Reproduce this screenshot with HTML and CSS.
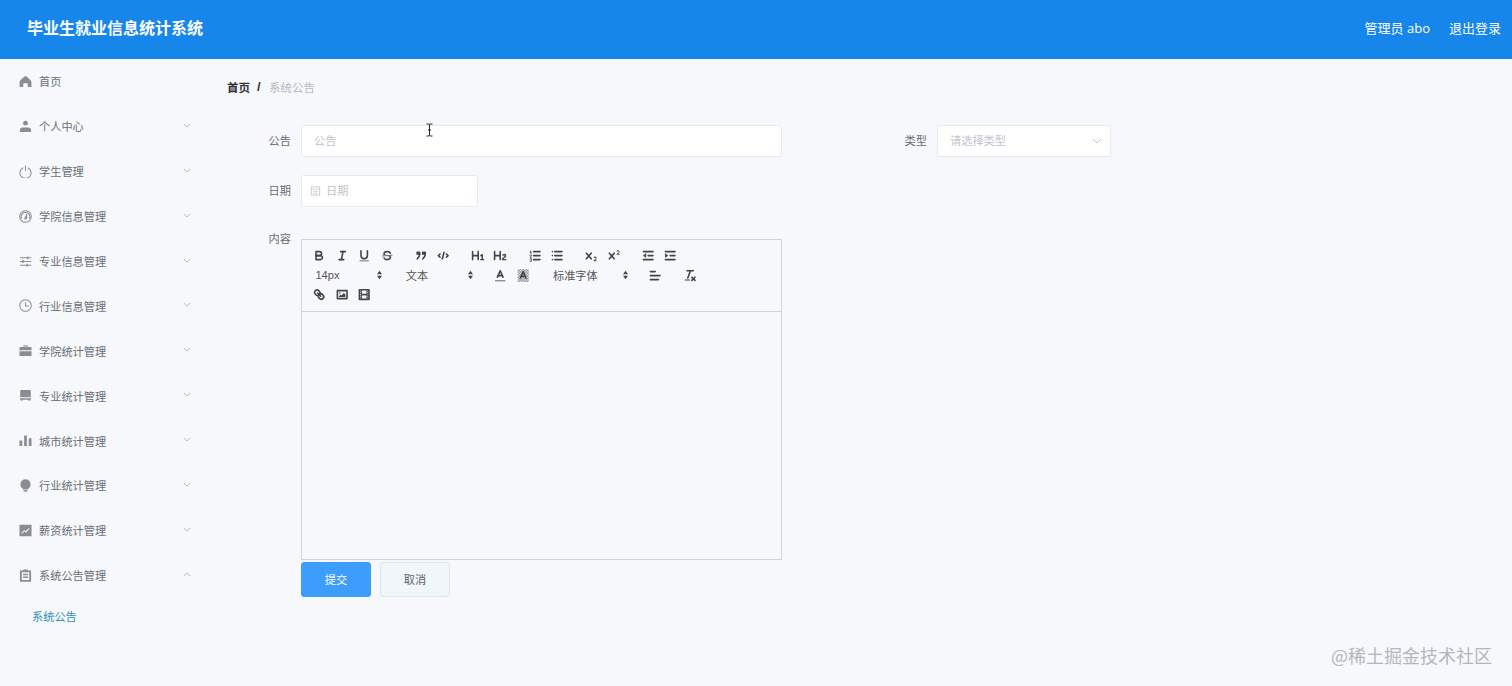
FILE: index.html
```html
<!DOCTYPE html>
<html lang="zh">
<head>
<meta charset="utf-8">
<title>毕业生就业信息统计系统</title>
<link rel="stylesheet" href="styles.css">
</head>
<body>
<svg class="sprite" aria-hidden="true">
  <defs>
    <symbol id="chev" viewBox="0 0 10 6"><polyline points="1 1 5 5 9 1"/></symbol>
    <symbol id="arrows" viewBox="0 0 8 12"><path d="M4 1 7 5H1zM4 11 1 7H7z"/></symbol>
    <pattern id="dots" width="2" height="2" patternUnits="userSpaceOnUse"><rect width="1" height="1" fill="#444"/><rect x="1" y="1" width="1" height="1" fill="#444"/></pattern>
  </defs>
</svg>
<header class="topbar">
  <div class="brand">毕业生就业信息统计系统</div>
  <div class="top-actions"><span>管理员 abo</span><span>退出登录</span></div>
</header>
<div class="layout">
  <nav class="sidebar">
    <div class="menu-item">
      <svg class="mi" viewBox="0 0 14 14"><path d="M7 1C5 2.200 1.600 4.600.6 7.200V13h4V9h4.800v4h4V7.200C12.400 4.600 9 2.200 7 1z"/></svg>
      <span>首页</span>
    </div>
    <div class="menu-item">
      <svg class="mi" viewBox="0 0 14 14"><circle cx="7" cy="3.400" r="2.600"/><path d="M1 13v-2c0-1.800 1.200-2.800 2.800-2.800h6.400c1.600 0 2.800 1 2.800 2.800v2z"/></svg>
      <span>个人中心</span><svg class="chev"><use href="#chev"/></svg>
    </div>
    <div class="menu-item">
      <svg class="mi line" viewBox="0 0 14 14"><path d="M4.400 3A6 6 0 1 0 9.600 3M7 .5V6.500"/></svg>
      <span>学生管理</span><svg class="chev"><use href="#chev"/></svg>
    </div>
    <div class="menu-item">
      <svg class="mi line" viewBox="0 0 14 14"><circle cx="7" cy="7" r="6.200"/><path d="M2.800 9.500A4.700 4.700 0 1 1 11.200 9.500M6.200 9.500 8.400 4.400 8 9.500z"/></svg>
      <span>学院信息管理</span><svg class="chev"><use href="#chev"/></svg>
    </div>
    <div class="menu-item">
      <svg class="mi line" viewBox="0 0 14 14"><path d="M1 3h12M1 7h12M1 11h12"/><path class="knob" d="M8.500 1.500h1.500v3H8.500zM3.500 5.500H5v3H3.500zM8 9.500h1.500v3H8z"/></svg>
      <span>专业信息管理</span><svg class="chev"><use href="#chev"/></svg>
    </div>
    <div class="menu-item">
      <svg class="mi line" viewBox="0 0 14 14"><circle cx="7" cy="7" r="6.200"/><path d="M7 3.500V7.500H10.500"/></svg>
      <span>行业信息管理</span><svg class="chev"><use href="#chev"/></svg>
    </div>
    <div class="menu-item">
      <svg class="mi" viewBox="0 0 14 14"><path d="M4.800 3.200V1.400h4.400v1.800H12.500c.5 0 1 .4 1 1v2.500H.5V4.200c0-.6.500-1 1-1zM5.800 3.200h2.400V2.400H5.800zM.5 7.800h13V13H.5z"/></svg>
      <span>学院统计管理</span><svg class="chev"><use href="#chev"/></svg>
    </div>
    <div class="menu-item">
      <svg class="mi" viewBox="0 0 14 14"><path d="M2.500 1h9c.8 0 1.200.5 1.200 1.200V9H1.300V2.200C1.300 1.500 1.700 1 2.500 1zM1.300 10h11.400v1.500c0 .5-.4 1-1 1H10l-.5-1h-5l-.5 1H2.300c-.6 0-1-.5-1-1z"/></svg>
      <span>专业统计管理</span><svg class="chev"><use href="#chev"/></svg>
    </div>
    <div class="menu-item">
      <svg class="mi" viewBox="0 0 14 14"><path d="M.5 7h3v6h-3zM5.500 1.500h3V13h-3zM10.500 4.500h3V13h-3z"/></svg>
      <span>城市统计管理</span><svg class="chev"><use href="#chev"/></svg>
    </div>
    <div class="menu-item">
      <svg class="mi" viewBox="0 0 14 14"><path d="M7 .4a5.400 5.400 0 0 1 3 9.900V11.300H4V10.300A5.400 5.400 0 0 1 7 .4zM4.800 12h4.400v1c0 .4-.4.8-1 .8H5.800c-.6 0-1-.4-1-.8z"/></svg>
      <span>行业统计管理</span><svg class="chev"><use href="#chev"/></svg>
    </div>
    <div class="menu-item">
      <svg class="mi" viewBox="0 0 14 14"><path fill-rule="evenodd" d="M.5.8h13v12.400H.5zM2.600 9.800l.7.7 2.600-2.700 1.700 1.500 3.600-4.300-.8-.6-2.900 3.500-1.700-1.500z"/></svg>
      <span>薪资统计管理</span><svg class="chev"><use href="#chev"/></svg>
    </div>
    <div class="menu-item">
      <svg class="mi" viewBox="0 0 14 14"><path fill-rule="evenodd" d="M4.500 1.500V.5h5v1H13v12.200H1V1.500zM3 3.400V11.800H11V3.400zM4.300 5.200h5.400v1.400H4.300zM4.300 8.200h5.400v1.400H4.300z"/></svg>
      <span>系统公告管理</span><svg class="chev up"><use href="#chev"/></svg>
    </div>
    <div class="sub-item">系统公告</div>
  </nav>

  <main class="content">
    <div class="crumbs"><b>首页</b><i>/</i><span>系统公告</span></div>
    <div class="row first">
      <label class="lab">公告</label>
      <div class="field wide">公告</div>
      <label class="lab type-lab">类型</label>
      <div class="field select">请选择类型<svg class="sel-chev"><use href="#chev"/></svg></div>
    </div>
    <div class="row">
      <label class="lab">日期</label>
      <div class="field date">
        <svg class="cal" viewBox="0 0 12 12"><path d="M1.500 2h9v9h-9zM1.500 4.500h9M3.500 7h5M3.500 9h5"/></svg>日期
      </div>
    </div>
    <div class="row top">
      <label class="lab">内容</label>
      <div class="editor">
        <div class="toolbar">
          <div class="tb-row">
            <div class="tb-group">
              <svg class="qi" viewBox="0 0 18 18"><path d="M5,4H9.500A2.500,2.500,0,0,1,12,6.500v0A2.500,2.500,0,0,1,9.500,9H5A0,0,0,0,1,5,9V4A0,0,0,0,1,5,4Z"/><path d="M5,9h5.500A2.500,2.500,0,0,1,13,11.500v0A2.500,2.500,0,0,1,10.500,14H5a0,0,0,0,1,0,0V9A0,0,0,0,1,5,9Z"/></svg>
              <svg class="qi" viewBox="0 0 18 18"><line x1="7" x2="13" y1="4" y2="4"/><line x1="5" x2="11" y1="14" y2="14"/><line x1="8" x2="10" y1="14" y2="4"/></svg>
              <svg class="qi" viewBox="0 0 18 18"><path d="M5,3V9a4.012,4.012,0,0,0,4,4H9a4.012,4.012,0,0,0,4-4V3"/><rect class="fl" height="1" rx="0.500" width="12" x="3" y="15"/></svg>
              <svg class="qi" viewBox="0 0 18 18"><line class="thin" x1="15" x2="3" y1="8.500" y2="9.500"/><path class="fl" d="M9.007,8C6.542,7.791,6,7.519,6,6.500,6,5.792,7.283,5,9,5c1.571,0,2.765.679,2.969,1.309a1,1,0,0,0,1.900-.617C13.356,4.106,11.354,3,9,3,6.200,3,4,4.538,4,6.500a3.200,3.200,0,0,0,.5,1.843Z"/><path class="fl" d="M8.984,10C11.457,10.208,12,10.479,12,11.500c0,.708-1.283,1.500-3,1.500-1.571,0-2.765-.679-2.969-1.309a1,1,0,1,0-1.900.617C4.644,13.894,6.646,15,9,15c2.800,0,5-1.538,5-3.500a3.200,3.200,0,0,0-.5-1.843Z"/></svg>
            </div>
            <div class="tb-group">
              <svg class="qi" viewBox="0 0 18 18"><rect class="fl" height="4" width="5" x="3" y="4"/><rect class="fl" height="4" width="5" x="10" y="4"/><path d="M7,7c0,4-3,6-3,6"/><path d="M14,7c0,4-3,6-3,6"/></svg>
              <svg class="qi" viewBox="0 0 18 18"><polyline points="5 7 3 9 5 11"/><polyline points="13 7 15 9 13 11"/><line x1="10" x2="8" y1="5" y2="13"/></svg>
            </div>
            <div class="tb-group">
              <svg class="qi" viewBox="0 0 18 18"><path class="fl" d="M10,4V14a1,1,0,0,1-2,0V10H3v4a1,1,0,0,1-2,0V4A1,1,0,0,1,3,4V8H8V4a1,1,0,0,1,2,0Zm6.068,9.209H14.990V7.599a.541.541,0,0,0-.605-.605h-.627a1.011,1.011,0,0,0-.748.297L11.645,8.566a.544.544,0,0,0-.022.858l.286.308a.539.539,0,0,0,.847.033l.099-.088a1.214,1.214,0,0,0,.242-.353h.022s-.011.309-.011.605V13.209H12.041a.541.541,0,0,0-.605.605v.439a.541.541,0,0,0,.605.605h4.027a.541.541,0,0,0,.605-.605v-.439A.541.541,0,0,0,16.068,13.209Z"/></svg>
              <svg class="qi" viewBox="0 0 18 18"><path class="fl" d="M16.740,13.814v.439a.541.541,0,0,1-.605.605H11.855a.584.584,0,0,1-.649-.605V14.013c0-2.905,3.399-3.422,3.399-4.555a.777.777,0,0,0-.847-.781,1.177,1.177,0,0,0-.836.385c-.275.264-.561.374-.858.132l-.429-.341c-.308-.242-.385-.518-.154-.814a2.972,2.972,0,0,1,2.454-1.177,2.454,2.454,0,0,1,2.684,2.409c0,2.453-3.179,2.927-3.278,3.938h2.794A.541.541,0,0,1,16.740,13.814ZM9,3A1,1,0,0,0,8,4V8H3V4A1,1,0,0,0,1,4V14a1,1,0,0,0,2,0V10H8v4a1,1,0,0,0,2,0V4A1,1,0,0,0,9,3Z"/></svg>
            </div>
            <div class="tb-group">
              <svg class="qi" viewBox="0 0 18 18"><line x1="7" x2="15" y1="4" y2="4"/><line x1="7" x2="15" y1="9" y2="9"/><line x1="7" x2="15" y1="14" y2="14"/><line class="thin" x1="2.500" x2="4.500" y1="5.500" y2="5.500"/><path class="fl" d="M3.500,6A.5.5,0,0,0,4,5.500V3.500a.5.5,0,0,0-.5-.5H3a.5.5,0,0,0,0,1V5.500A.5.5,0,0,0,3.500,6Z"/><path class="thin" d="M4.500,11H2.500c0-1,2-1.500,2-2.200a.9.9,0,0,0-2,0"/><path class="thin" d="M2.500,13.500a1,1,0,0,1,2,0,1,1,0,0,1-1,1,1,1,0,0,1,1,1,1,1,0,0,1-2,0"/></svg>
              <svg class="qi" viewBox="0 0 18 18"><line x1="6" x2="15" y1="4" y2="4"/><line x1="6" x2="15" y1="9" y2="9"/><line x1="6" x2="15" y1="14" y2="14"/><line x1="3" x2="3" y1="4" y2="4"/><line x1="3" x2="3" y1="9" y2="9"/><line x1="3" x2="3" y1="14" y2="14"/></svg>
            </div>
            <div class="tb-group">
              <svg class="qi" viewBox="0 0 18 18"><path class="fl" d="M15.500,15H13.861a3.858,3.858,0,0,0,1.914-2.975,1.800,1.800,0,0,0-1.600-1.751A1.921,1.921,0,0,0,12.021,11.700a.5.5,0,1,0,.957.291h0a.914.914,0,0,1,1.053-.725.81.81,0,0,1,.744.762c0,1.076-1.170,1.870-1.940,2.431A1.456,1.456,0,0,0,12,15.500a.5.5,0,0,0,.5.5h3A.5.5,0,0,0,15.500,15Z"/><path class="fl" d="M9.650,5.241a1,1,0,0,0-1.409.108L6,7.964,3.759,5.349A1,1,0,0,0,2.192,6.592q.023.030.049.057L4.684,9.500,2.241,12.350A1,1,0,0,0,3.710,13.707q.026-.028.049-.057L6,11.036,8.241,13.650a1,1,0,1,0,1.567-1.243q-.023-.030-.049-.057L7.316,9.500,9.759,6.651A1,1,0,0,0,9.650,5.241Z"/></svg>
              <svg class="qi" viewBox="0 0 18 18"><path class="fl" d="M15.500,7H13.861a4.015,4.015,0,0,0,1.914-2.975,1.800,1.800,0,0,0-1.600-1.751A1.922,1.922,0,0,0,12.021,3.700a.5.5,0,1,0,.957.291.917.917,0,0,1,1.053-.725.81.81,0,0,1,.744.762c0,1.077-1.164,1.925-1.934,2.486A1.423,1.423,0,0,0,12,7.500a.5.5,0,0,0,.5.5h3A.5.5,0,0,0,15.500,7Z"/><path class="fl" d="M9.651,5.241a1,1,0,0,0-1.410.108L6,7.964,3.759,5.349A1,1,0,1,0,2.241,6.651L4.684,9.500,2.241,12.350a1,1,0,1,0,1.518,1.300L6,11.036,8.241,13.650a1,1,0,0,0,1.518-1.300L7.316,9.500,9.759,6.651A1,1,0,0,0,9.651,5.241Z"/></svg>
            </div>
            <div class="tb-group">
              <svg class="qi" viewBox="0 0 18 18"><line x1="3" x2="15" y1="14" y2="14"/><line x1="3" x2="15" y1="4" y2="4"/><line x1="9" x2="15" y1="9" y2="9"/><polyline class="tri" points="6 7 6 11 3 9 6 7"/></svg>
              <svg class="qi" viewBox="0 0 18 18"><line x1="3" x2="15" y1="14" y2="14"/><line x1="3" x2="15" y1="4" y2="4"/><line x1="9" x2="15" y1="9" y2="9"/><polyline class="tri" points="3 7 3 11 6 9 3 7"/></svg>
            </div>
          </div>
          <div class="tb-row">
            <div class="tb-group">
              <div class="picker">14px<svg class="updown"><use href="#arrows"/></svg></div>
            </div>
            <div class="tb-group">
              <div class="picker">文本<svg class="updown"><use href="#arrows"/></svg></div>
            </div>
            <div class="tb-group">
              <svg class="qi" viewBox="0 0 18 18"><line class="thin" x1="3" x2="15" y1="15.500" y2="15.500"/><polyline points="5.500 11 9 3 12.500 11"/><line x1="11.630" x2="6.380" y1="9" y2="9"/></svg>
              <svg class="qi" viewBox="0 0 18 18"><rect class="dotted" x="2" y="1" width="14" height="16"/><polyline points="5.500 12 9 4 12.500 12"/><line x1="11.630" x2="6.380" y1="10" y2="10"/></svg>
            </div>
            <div class="tb-group">
              <div class="picker font">标准字体<svg class="updown"><use href="#arrows"/></svg></div>
            </div>
            <div class="tb-group">
              <svg class="qi" viewBox="0 0 18 18"><line x1="3" x2="15" y1="9" y2="9"/><line x1="3" x2="13" y1="14" y2="14"/><line x1="3" x2="9" y1="4" y2="4"/></svg>
            </div>
            <div class="tb-group">
              <svg class="qi" viewBox="0 0 18 18"><line x1="5" x2="13" y1="3" y2="3"/><line x1="6" x2="9.350" y1="12" y2="3"/><line x1="11" x2="15" y1="11" y2="15"/><line x1="15" x2="11" y1="11" y2="15"/><rect class="fl" height="1" rx="0.500" width="7" x="2" y="14"/></svg>
            </div>
          </div>
          <div class="tb-row">
            <div class="tb-group">
              <svg class="qi" viewBox="0 0 18 18"><line x1="7" x2="11" y1="7" y2="11"/><path d="M8.900,4.577a3.476,3.476,0,0,1,.36,4.679A3.476,3.476,0,0,1,4.577,8.900C3.185,7.500,2.035,6.400,4.217,4.217S7.500,3.185,8.900,4.577Z"/><path d="M13.423,9.100a3.476,3.476,0,0,0-4.679-.36,3.476,3.476,0,0,0,.36,4.679c1.392,1.392,2.500,2.542,4.679.36S14.815,10.500,13.423,9.100Z"/></svg>
              <svg class="qi" viewBox="0 0 18 18"><rect height="10" width="12" x="3" y="4"/><circle class="fl" cx="6" cy="7" r="1"/><polyline class="fl" points="5 12 5 11 7 9 8 10 11 7 13 9 13 12 5 12"/></svg>
              <svg class="qi" viewBox="0 0 18 18"><rect height="12" width="12" x="3" y="3"/><rect class="fl" height="12" width="1" x="5" y="3"/><rect class="fl" height="12" width="1" x="12" y="3"/><rect class="fl" height="2" width="8" x="5" y="8"/><rect class="fl" height="1" width="3" x="3" y="5"/><rect class="fl" height="1" width="3" x="3" y="7"/><rect class="fl" height="1" width="3" x="3" y="10"/><rect class="fl" height="1" width="3" x="3" y="12"/><rect class="fl" height="1" width="3" x="12" y="5"/><rect class="fl" height="1" width="3" x="12" y="7"/><rect class="fl" height="1" width="3" x="12" y="10"/><rect class="fl" height="1" width="3" x="12" y="12"/></svg>
            </div>
          </div>
        </div>
        <div class="edit-area"></div>
      </div>
    </div>
    <div class="actions">
      <button class="btn primary" type="button">提交</button>
      <button class="btn" type="button">取消</button>
    </div>
  </main>
</div>
<svg class="ibeam" viewBox="0 0 9 14"><path d="M1.500 1H3.500C4 1 4.500 1.300 4.500 2V12C4.500 12.700 4 13 3.500 13H1.500M7.500 1H5.500C5 1 4.500 1.300 4.500 2M4.500 12C4.500 12.700 5 13 5.500 13H7.500M3 7H6"/></svg>
<div class="watermark">@稀土掘金技术社区</div>
</body>
</html>
```

FILE: styles.css
```css
* { box-sizing: border-box; }
html, body { height: 100%; }
body {
  margin: 0;
  position: relative;
  overflow: hidden;
  background: #f6f8fb;
  color: #6a6d73;
  font-family: "Noto Sans CJK SC", "Open Sans", sans-serif;
  font-size: 11.2px;
}
.sprite { position: absolute; width: 0; height: 0; }
.topbar {
  height: 59px;
  background: #1686ea;
  color: #fff;
  display: flex;
  align-items: center;
  justify-content: space-between;
  padding: 0 11px 5px 27px;
}
.brand { font-size: 16px; font-weight: 700; }
.top-actions { display: flex; gap: 19px; font-size: 13px; font-family: "Open Sans", "Noto Sans CJK SC", sans-serif; }
.layout { display: flex; }
.sidebar { width: 210px; flex: none; display: flex; flex-direction: column; }
.menu-item {
  height: 44.9px;
  display: flex;
  align-items: center;
  padding: 0 19px;
  color: #6b6f75;
  position: relative;
}
.menu-item span { margin-left: 7px; flex: 1; }
.mi { width: 13px; height: 13px; flex: none; fill: #8a8e93; }
.mi.line { fill: none; stroke: #8a8e93; stroke-width: 1.1; }
.mi .knob { fill: #8a8e93; stroke: none; }
.chev { width: 8px; height: 5px; flex: none; margin-bottom: 2px; fill: none; stroke: #a4a8ad; stroke-width: 1; }
.chev.up { transform: rotate(180deg); }
.sub-item { height: 36px; line-height: 36px; padding-left: 32px; color: #2f8fb8; }

.content { flex: 1; padding: 20px 0 0 17px; }
.crumbs { height: 16px; line-height: 16px; display: flex; align-items: center; margin-bottom: 30px; color: #b4b8bf; font-size: 11.5px; }
.crumbs b { color: #303133; font-weight: 600; }
.crumbs i { color: #303133; font-weight: 700; margin: 0 7px 0 7px; width: 5px; font-size: 13px; font-style: normal; font-family: "Liberation Sans", sans-serif; }
.row { display: flex; align-items: center; margin-bottom: 18px; }
.row.top { align-items: flex-start; margin-top: 24px; margin-bottom: 2px; }
.lab { width: 65px; flex: none; text-align: right; margin-right: 9px; padding-right: 1px; line-height: 14px; margin-bottom: 2px; }
.type-lab { margin-left: 81px; }
.field {
  height: 32px;
  background: #fff;
  border: 1px solid #e6e9ef;
  border-radius: 3px;
  padding-bottom: 2px;
  color: #c0c4cc;
  display: flex;
  align-items: center;
}
.wide { width: 481px; padding-left: 12px; }
.select { width: 174px; padding-left: 12px; justify-content: space-between; padding-right: 8px; }
.sel-chev { width: 10px; height: 6px; margin-top: 2px; fill: none; stroke: #c0c4cc; stroke-width: 1; }
.date { width: 177px; padding-left: 8px; }
.cal { width: 11px; height: 11px; margin-right: 5px; fill: none; stroke: #c9ccd2; stroke-width: 1; }

.editor { width: 481px; height: 321px; margin-top: 8px; border: 1px solid #d2d4d8; display: flex; flex-direction: column; }
.toolbar { height: 72px; flex: none; border-bottom: 1px solid #d2d4d8; padding: 6px 0 0 6.4px; display: flex; flex-direction: column; }
.tb-row { display: flex; height: 19.5px; flex: none; align-items: center; }
.tb-group { display: flex; align-items: center; margin-right: 12px; }
.qi { width: 22.4px; height: 19.2px; padding: 2.4px 4px; flex: none; fill: none; stroke: #444; stroke-width: 2; stroke-linecap: round; stroke-linejoin: round; }
.qi .fl { fill: #444; stroke: none; }
.qi .thin { stroke-width: 1; }
.qi .tri { fill: #444; stroke-width: 1; }
.qi .dotted { fill: url(#dots); stroke: none; opacity: 0.7; }
.picker {
  width: 78.4px;
  height: 19.2px;
  display: flex;
  align-items: center;
  justify-content: space-between;
  padding: 0 3.5px 0 7px;
  color: #555;
  font-family: "Liberation Sans", "Noto Sans CJK SC", sans-serif;
  font-size: 11.2px;
}
.picker.font { width: 86.4px; }
.updown { width: 7px; height: 10px; fill: #444; flex: none; }
.edit-area { flex: 1; }

.actions { display: flex; gap: 9px; padding-left: 74px; }
.btn {
  width: 70px;
  height: 35px;
  border: 1px solid #dfe6ee;
  border-radius: 3px;
  background: #f1f6fb;
  color: #606266;
  font: inherit;
  padding: 0 0 2px;
}
.btn.primary { background: #3d9dfd; border-color: #3d9dfd; color: #fff; }

.ibeam { position: absolute; left: 425px; top: 123px; width: 9px; height: 14px; fill: none; stroke: #222; stroke-width: 1; }
.watermark { position: absolute; left: 1331px; top: 642px; font-size: 18px; line-height: 26px; color: #b3b7bd; white-space: nowrap; }
```
